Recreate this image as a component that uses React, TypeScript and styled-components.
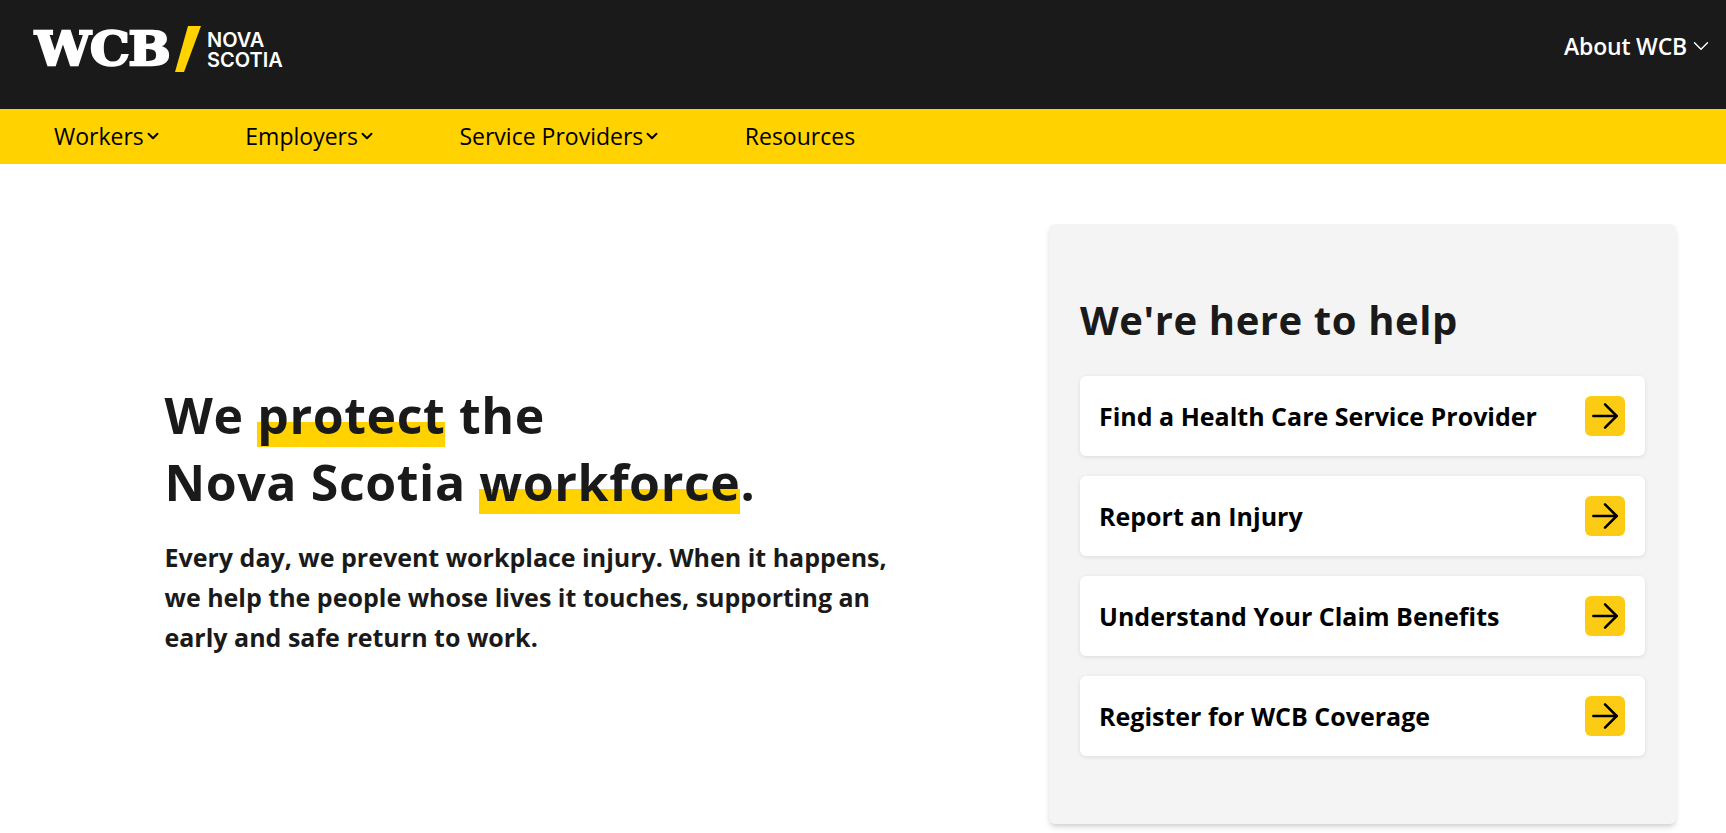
import React from 'react';
import styled, { createGlobalStyle } from 'styled-components';
import { ArrowRight, ChevronDown } from 'lucide-react';

const GlobalStyle = createGlobalStyle`
  html, body {
    margin: 0;
    padding: 0;
    height: 100%;
    overflow: hidden;
    background: #fff;
    font-family: "Open Sans", "Liberation Sans", sans-serif;
  }
  * {
    box-sizing: border-box;
  }
`;

const TopBar = styled.header`
  height: 109px;
  background: #1a1a1a;
  display: flex;
  justify-content: space-between;
  align-items: flex-start;
  padding: 26px 12px 0 35px;
`;

const Logo = styled.a`
  display: flex;
  align-items: center;
  height: 46px;
  color: #fff;
`;

const LogoMark = styled.span`
  font-family: "DejaVu Serif", serif;
  font-weight: 700;
  font-size: 47px;
  line-height: 46px;
  letter-spacing: -1px;
  -webkit-text-stroke: 2.4px #fff;
  width: 134px;
  white-space: nowrap;
  transform-origin: left center;
  transform: scaleX(1.06);
`;

const LogoSlash = styled.svg`
  width: 26px;
  height: 46px;
  margin: 0 6px;
  flex: none;
`;

const LogoPlace = styled.span`
  font-family: "Inter", sans-serif;
  font-weight: 600;
  font-size: 20px;
  line-height: 20px;
  padding-top: 1px;
`;

const AboutButton = styled.a`
  display: flex;
  align-items: center;
  gap: 1px;
  color: #fff;
  font-size: 23px;
  font-weight: 600;
  letter-spacing: -0.2px;
  line-height: 40px;
`;

const NavBar = styled.nav`
  height: 55px;
  background: #ffd200;
  display: flex;
  align-items: center;
  gap: 83.5px;
  padding: 0 0 2px 54px;
`;

const NavItem = styled.a`
  display: flex;
  align-items: center;
  color: #000;
  font-size: 23px;
  font-weight: 500;
`;

const Main = styled.main`
  display: flex;
  justify-content: space-between;
  align-items: center;
  padding: 60px 50px 0 164.5px;
`;

const Hero = styled.section`
  width: 740px;
  padding-bottom: 10px;
  color: #1a1a1a;
`;

const Headline = styled.h1`
  margin: 0 0 21px;
  font-size: 50px;
  line-height: 67px;
  font-weight: 700;
  letter-spacing: 0.6px;
`;

const Marked = styled.span`
  background: linear-gradient(to bottom, transparent 60%, #ffd200 60%, #ffd200 97%, transparent 97%);
`;

const Intro = styled.p`
  margin: 0;
  font-size: 25px;
  line-height: 40px;
  font-weight: 700;
`;

const HelpPanel = styled.aside`
  width: 627px;
  height: 600px;
  padding: 62px 31px 0;
  background: #f4f4f4;
  border-radius: 6px;
  box-shadow: 0 4px 6px -1px rgba(0, 0, 0, 0.15), 0 2px 4px -2px rgba(0, 0, 0, 0.1);
`;

const HelpTitle = styled.h2`
  margin: 0 0 22px;
  font-size: 40px;
  line-height: 68px;
  font-weight: 700;
  letter-spacing: 0.6px;
  color: #1a1a1a;
`;

const LinkList = styled.div`
  display: flex;
  flex-direction: column;
  gap: 20px;
`;

const LinkCard = styled.a`
  height: 80px;
  display: flex;
  justify-content: space-between;
  align-items: center;
  padding: 0 20px 0 19px;
  background: #fff;
  border-radius: 6px;
  box-shadow: 0 1px 4px rgba(0, 0, 0, 0.1);
  color: #000;
  font-size: 25px;
  font-weight: 700;
`;

const ArrowBox = styled.span`
  width: 40px;
  height: 40px;
  display: flex;
  align-items: center;
  justify-content: center;
  border-radius: 6px;
  background: #fccc14;
  color: #000;
`;

const navItems = [
  { label: 'Workers', menu: true },
  { label: 'Employers', menu: true },
  { label: 'Service Providers', menu: true },
  { label: 'Resources', menu: false },
];

const helpLinks = [
  'Find a Health Care Service Provider',
  'Report an Injury',
  'Understand Your Claim Benefits',
  'Register for WCB Coverage',
];

export default function App() {
  return (
    <>
      <GlobalStyle />
      <TopBar>
        <Logo>
          <LogoMark>WCB</LogoMark>
          <LogoSlash viewBox="0 0 26 46">
            <polygon points="13,0 26,0 9,46 0,46" fill="#ffd200" />
          </LogoSlash>
          <LogoPlace>
            NOVA
            <br />
            SCOTIA
          </LogoPlace>
        </Logo>
        <AboutButton>
          About WCB
          <ChevronDown size={26} strokeWidth={1.3} />
        </AboutButton>
      </TopBar>
      <NavBar>
        {navItems.map((item) => (
          <NavItem key={item.label}>
            {item.label}
            {item.menu && <ChevronDown size={18} strokeWidth={2.6} />}
          </NavItem>
        ))}
      </NavBar>
      <Main>
        <Hero>
          <Headline>
            We <Marked>protect</Marked> the
            <br />
            Nova Scotia <Marked>workforce</Marked>.
          </Headline>
          <Intro>
            Every day, we prevent workplace injury. When it happens,
            <br />
            we help the people whose lives it touches, supporting an
            <br />
            early and safe return to work.
          </Intro>
        </Hero>
        <HelpPanel>
          <HelpTitle>We're here to help</HelpTitle>
          <LinkList>
            {helpLinks.map((label) => (
              <LinkCard key={label}>
                {label}
                <ArrowBox>
                  <ArrowRight size={40} strokeWidth={1.5} />
                </ArrowBox>
              </LinkCard>
            ))}
          </LinkList>
        </HelpPanel>
      </Main>
    </>
  );
}
